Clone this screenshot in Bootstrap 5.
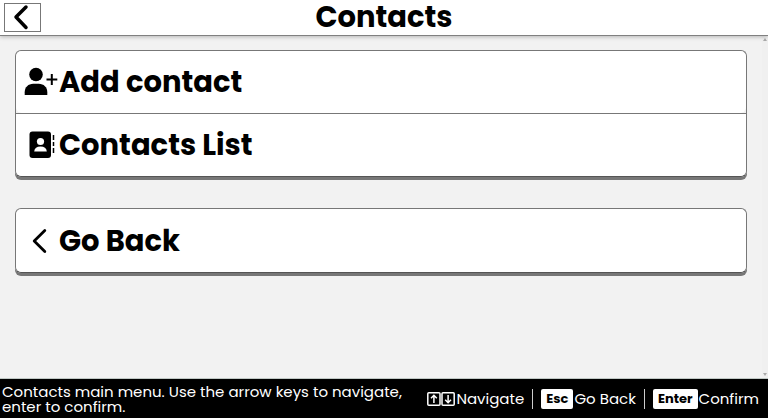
<!DOCTYPE html>
<html lang="en">
<head>
<meta charset="utf-8">
<meta name="viewport" content="width=device-width, initial-scale=1">
<title>Contacts</title>
<link href="https://cdn.jsdelivr.net/npm/bootstrap@5.3.0/dist/css/bootstrap.min.css" rel="stylesheet">
<style>
body { font-family: Poppins, Inter, sans-serif; color: #000; background: #f2f2f2; }
.topbar { min-height: 36px; padding: 0 4px; border-bottom: 1px solid #808080; box-shadow: 0 1px 4px rgba(0,0,0,.25); z-index: 1; }
.side { flex: 1 1 0; }
.back-btn { width: 37px; height: 29px; border: 1px solid #777; background: #fff; }
.page-title { font-size: 29px; line-height: 35px; font-weight: 700; }
.content-area { padding: 14px 15px 0; }
.menu-group { border: 1px solid #777; border-radius: 6px; box-shadow: 0 3px 0 #777; border-bottom-color: #555; }
.menu-group + .menu-group { margin-top: 31px; }
.menu-row { min-height: 62px; padding: 0 8px; border: 0; border-radius: 6px; background: #fff; color: #000; font-size: 29px; line-height: 36px; font-weight: 700; }
.menu-row:last-child { min-height: 63px; }
.menu-row + .menu-row { border-top: 1px solid #777; border-radius: 0 0 6px 6px; }
.menu-row svg { width: 35px; height: 32px; flex: none; }
.scroll-rail { width: 6px; background: #f0f0f0; padding: 2px 1px; }
.helpbar { min-height: 40px; background: #000; color: #fff; border-top: 1px solid #c0c8c5; font-size: 15px; line-height: 15px; }
.help-text { width: 54%; padding: 0 2px; }
.key-hints { padding-right: 9px; }
.hint { border: 0; background: none; color: #fff; padding: 0; line-height: 20px; }
.hint + .hint { border-left: 1px solid #ccc; padding-left: 8px; margin-left: 8px; }
.keycap { background: #fff; color: #000; font: inherit; font-size: 13px; font-weight: 700; line-height: 20px; padding: 0 5px; border-radius: 2px; margin-right: 1px; }
</style>
<script src="https://cdn.jsdelivr.net/npm/bootstrap@5.3.0/dist/js/bootstrap.bundle.min.js" defer></script>
</head>
<body class="vh-100 d-flex flex-column overflow-hidden">
<header class="topbar bg-white d-flex align-items-center">
  <div class="side d-flex">
    <button type="button" class="back-btn d-flex align-items-center p-0" aria-label="Back">
      <svg width="34" height="27" viewBox="0 0 34 27" fill="none" stroke="#000" stroke-width="3.500" stroke-linecap="round" stroke-linejoin="round"><path d="M21 3 11 13l10 10.500"/></svg>
    </button>
  </div>
  <h1 class="page-title m-0">Contacts</h1>
  <div class="side"></div>
</header>
<div class="d-flex flex-grow-1">
  <main class="content-area flex-grow-1">
    <div class="menu-group">
      <button type="button" class="menu-row w-100 d-flex align-items-center text-start">
        <svg viewBox="0 0 35 32" aria-hidden="true"><circle cx="12" cy="8.500" r="6.800"/><path d="M.7 29v-2.700c0-5 3.600-8.500 8.500-8.500h5.600c4.900 0 8.500 3.500 8.500 8.500V29z"/><path d="M27.800 8v11M22.500 13.500h10.800" stroke="#000" stroke-width="2"/></svg>
        <span>Add contact</span>
      </button>
      <button type="button" class="menu-row w-100 d-flex align-items-center text-start">
        <svg viewBox="0 0 35 32" aria-hidden="true"><rect x="5.500" y="2.500" width="21.500" height="26.500" rx="3"/><circle cx="16.500" cy="12.500" r="3.600" fill="#fff"/><path d="M10.200 22.500c.3-3.400 2.500-5 6.300-5s6 1.600 6.300 5z" fill="#fff"/><path d="M29.500 6v5M29.500 13v4M29.500 19v5" stroke="#000" stroke-width="1.500"/></svg>
        <span>Contacts List</span>
      </button>
    </div>
    <div class="menu-group">
      <button type="button" class="menu-row w-100 d-flex align-items-center text-start">
        <svg viewBox="0 0 35 32" fill="none" stroke="#000" stroke-width="2.800" stroke-linecap="round" stroke-linejoin="round" aria-hidden="true"><path d="M20.800 5.500 10.200 16l10.600 10.500"/></svg>
        <span>Go Back</span>
      </button>
    </div>
  </main>
  <div class="scroll-rail d-flex flex-column justify-content-between" aria-hidden="true">
    <svg width="4" height="3"><path d="M2 0 4 3H0z" fill="#aaa"/></svg>
    <svg width="4" height="3"><path d="M0 0h4L2 3z" fill="#aaa"/></svg>
  </div>
</div>
<footer class="helpbar d-flex align-items-center justify-content-between">
  <div class="help-text">Contacts main menu. Use the arrow keys to navigate, enter to confirm.</div>
  <div class="key-hints d-flex align-items-center text-nowrap">
    <div class="hint d-flex align-items-center">
      <svg width="29" height="14" viewBox="0 0 29 14" fill="none" stroke="#fff" stroke-width="1.500" aria-hidden="true"><rect x=".8" y=".8" width="12.200" height="12.400" rx="1"/><path d="M6.900 11V3.500M4 6.200l2.900-2.900 2.900 2.900"/><rect x="15" y=".8" width="12.200" height="12.400" rx="1"/><path d="M21.100 3v7.500M18.200 7.800l2.900 2.900L24 7.800"/></svg>
      <span>Navigate</span>
    </div>
    <button type="button" class="hint d-flex align-items-center"><kbd class="keycap">Esc</kbd><span>Go Back</span></button>
    <button type="button" class="hint d-flex align-items-center"><kbd class="keycap">Enter</kbd><span>Confirm</span></button>
  </div>
</footer>
</body>
</html>
